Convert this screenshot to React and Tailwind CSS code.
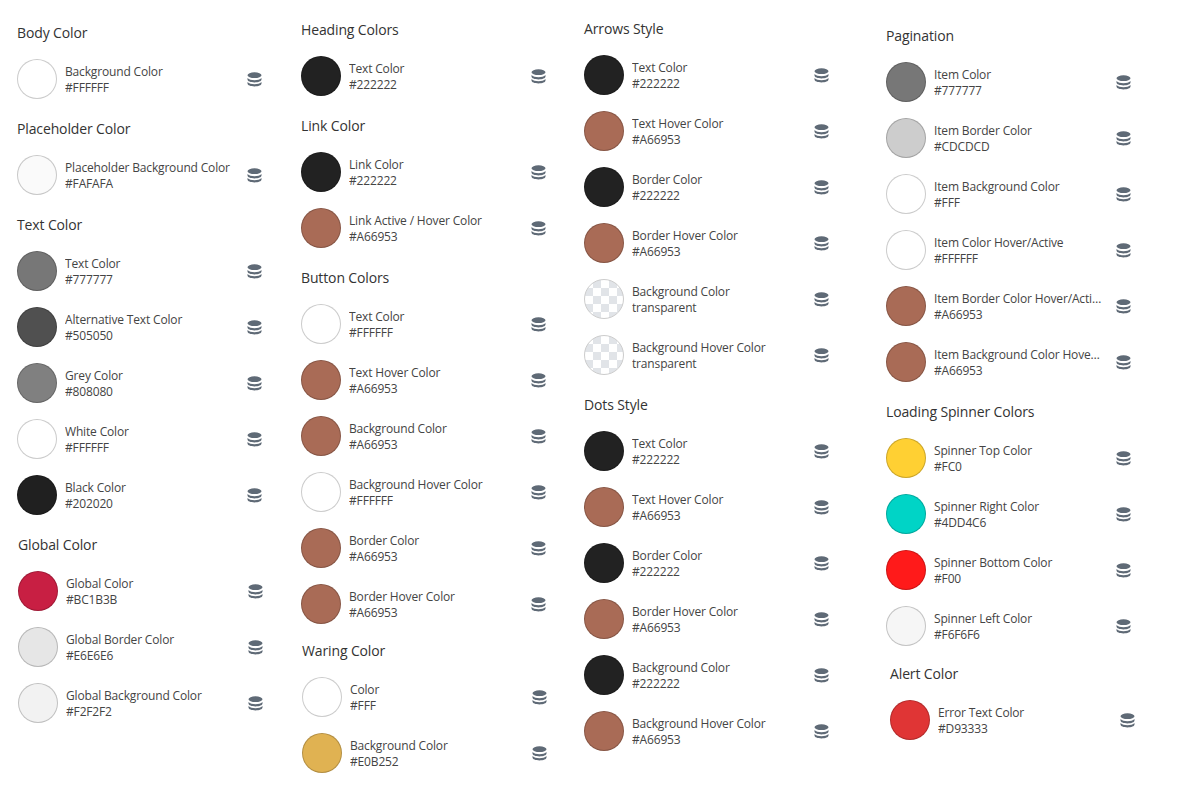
import React from "react";

const B = "#A96B56";
const cols = [
  { cls: "w-[301px] pl-[17px] pt-[23px]", sections: [
    { t: "Body Color", r: [["Background Color", "#FFFFFF"]] },
    { t: "Placeholder Color", r: [["Placeholder Background Color", "#FAFAFA"]] },
    { t: "Text Color", r: [["Text Color", "#777777"], ["Alternative Text Color", "#505050"], ["Grey Color", "#808080"], ["White Color", "#FFFFFF"], ["Black Color", "#202020"]] },
    { t: "Global Color", cls: "ml-px", r: [["Global Color", "#BC1B3B", "#C81F43"], ["Global Border Color", "#E6E6E6"], ["Global Background Color", "#F2F2F2"]] },
  ]},
  { cls: "w-[283px] pt-[20px]", sections: [
    { t: "Heading Colors", r: [["Text Color", "#222222"]] },
    { t: "Link Color", r: [["Link Color", "#222222"], ["Link Active / Hover Color", "#A66953", B]] },
    { t: "Button Colors", r: [["Text Color", "#FFFFFF"], ["Text Hover Color", "#A66953", B], ["Background Color", "#A66953", B], ["Background Hover Color", "#FFFFFF"], ["Border Color", "#A66953", B], ["Border Hover Color", "#A66953", B]] },
    { t: "Waring Color", cls: "ml-px -mt-[3px]", r: [["Color", "#FFF"], ["Background Color", "#E0B252"]] },
  ]},
  { cls: "w-[302px] pt-[19px]", sections: [
    { t: "Arrows Style", r: [["Text Color", "#222222"], ["Text Hover Color", "#A66953", B], ["Border Color", "#222222"], ["Border Hover Color", "#A66953", B], ["Background Color", "transparent"], ["Background Hover Color", "transparent"]] },
    { t: "Dots Style", r: [["Text Color", "#222222"], ["Text Hover Color", "#A66953", B], ["Border Color", "#222222"], ["Border Hover Color", "#A66953", B], ["Background Color", "#222222"], ["Background Hover Color", "#A66953", B]] },
  ]},
  { cls: "pt-[26px]", sections: [
    { t: "Pagination", r: [["Item Color", "#777777"], ["Item Border Color", "#CDCDCD"], ["Item Background Color", "#FFF"], ["Item Color Hover/Active", "#FFFFFF"], ["Item Border Color Hover/Active", "#A66953", B], ["Item Background Color Hover/Active", "#A66953", B]] },
    { t: "Loading Spinner Colors", r: [["Spinner Top Color", "#FC0", "#FFD033"], ["Spinner Right Color", "#4DD4C6", "#00D4C6"], ["Spinner Bottom Color", "#F00", "#FF1A1A"], ["Spinner Left Color", "#F6F6F6"]] },
    { t: "Alert Color", cls: "ml-[4px] -mt-[2px]", r: [["Error Text Color", "#D93333", "#E03535"]] },
  ]},
];

function DbIcon() {
  return (
    <svg viewBox="0 0 15 15" className="ml-3 w-[15px] h-[15px] shrink-0 fill-[#5f6a76]">
      <ellipse cx="7.5" cy="3.2" rx="7" ry="2.9" />
      <path d="M.5 6.1C2 7.7 4.6 8.3 7.5 8.3S13 7.7 14.5 6.1V7.6C14.5 9.3 11.4 10.5 7.5 10.5S.5 9.3 .5 7.6Z" />
      <path d="M.5 10C2 11.6 4.6 12.2 7.5 12.2S13 11.6 14.5 10V11.6C14.5 13.3 11.4 14.5 7.5 14.5S.5 13.3 .5 11.6Z" />
    </svg>
  );
}

function Row({ r }) {
  const [label, value, fill] = r;
  const transparent = value === "transparent";
  return (
    <div className="flex items-center h-10">
      {transparent ? (
        <span className="w-10 h-10 shrink-0 rounded-full border border-[#cccccc] bg-[conic-gradient(#e1e4e8_25%,#ffffff_0_50%,#e1e4e8_0_75%,#ffffff_0)] bg-[length:16px_16px]" />
      ) : (
        <span className="w-10 h-10 shrink-0 rounded-full border border-[#00000033]" style={{ backgroundColor: fill || value }} />
      )}
      <div className="ml-2 w-[170px] pt-px text-xs leading-4 tracking-[-0.16px] text-[#444444]">
        <div className="truncate">{label}</div>
        <div className="truncate">{value}</div>
      </div>
      <DbIcon />
    </div>
  );
}

export default function App() {
  return (
    <div className="flex w-[1200px] h-[800px] overflow-hidden bg-white font-['Open_Sans','Noto_Sans',sans-serif]">
      {cols.map((c, i) => (
        <div key={i} className={"shrink-0 flex flex-col gap-5 " + c.cls}>
          {c.sections.map((s) => (
            <section key={s.t} className={s.cls}>
              <h3 className="h-5 mb-4 text-sm leading-5 tracking-[-0.13px] text-[#333333]">{s.t}</h3>
              <div className="flex flex-col gap-4">
                {s.r.map((r, j) => <Row key={j} r={r} />)}
              </div>
            </section>
          ))}
        </div>
      ))}
    </div>
  );
}
